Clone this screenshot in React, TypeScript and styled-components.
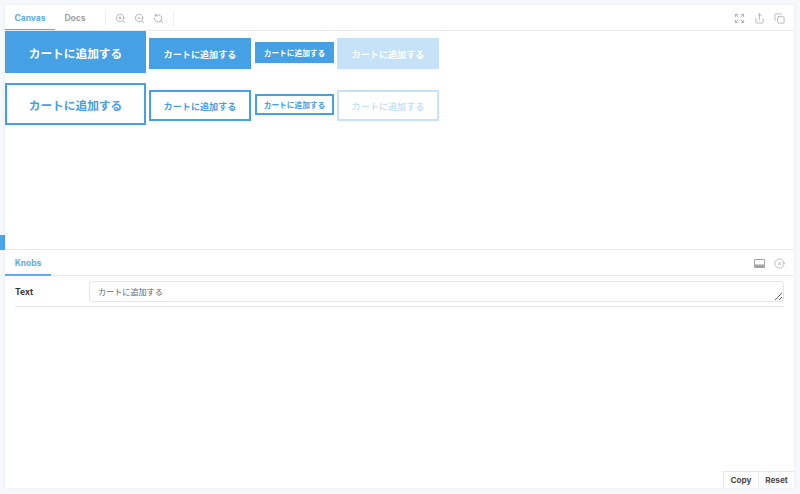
import React from "react"
import styled, { createGlobalStyle } from "styled-components"
import { ZoomIn, ZoomOut, Expand, Share, Copy, CircleX } from "lucide-react"

const BLUE = "#45a0e4"
const LABEL = "カートに追加する"

const GlobalStyle = createGlobalStyle`
  html, body {
    margin: 0;
    padding: 0;
    background: #f6f9fc;
    overflow: hidden;
  }
  body {
    font-family: "Inter", "Noto Sans CJK JP", sans-serif;
  }
`

const Page = styled.div`
  position: relative;
  width: 800px;
  height: 494px;
  padding: 5px 6px 6px 5px;
  box-sizing: border-box;
`

const SidebarMarker = styled.div`
  position: absolute;
  left: 0;
  top: 235px;
  width: 5px;
  height: 15px;
  background: #4aa5ea;
`

const Panel = styled.div`
  position: relative;
  display: flex;
  flex-direction: column;
  height: 483px;
  background: #fff;
  box-shadow: 0 0 4px rgba(0, 0, 0, 0.06);
`

const Toolbar = styled.div`
  display: flex;
  align-items: center;
  height: 25px;
  padding-top: 1px;
  box-sizing: border-box;
  flex: none;
  box-shadow: 0 1px 0 #e8e9ea;
  position: relative;
  z-index: 1;
`

const Tab = styled.div<{ $active?: boolean }>`
  display: flex;
  align-items: center;
  justify-content: center;
  font-size: 8.5px;
  font-weight: 700;
  height: 100%;
  box-sizing: border-box;
  color: ${(p) => (p.$active ? "#5cade9" : "#a0a0a0")};
`

const CanvasTab = styled(Tab)`
  width: 50px;
  padding-top: 1px;
  border-bottom: 1px solid #5cade9;
`

const DocsTab = styled(Tab)`
  width: 40px;
  margin-right: 10px;
`

const Separator = styled.div`
  width: 1px;
  height: 15px;
  background: #ececec;
`

const ToolGroup = styled.div`
  display: flex;
  align-items: center;
  gap: 8px;
  padding: 0 9px 0 9px;
  color: #a3a3a3;
`

const ToolEnd = styled(ToolGroup)`
  margin-left: auto;
  padding: 0 9px 0 0;
  gap: 9px;
`

const AddonTools = styled(ToolEnd)`
  padding-top: 2px;
`

const Canvas = styled.div`
  display: flex;
  flex-direction: column;
  gap: 10px;
  height: 220px;
  padding-top: 1px;
  flex: none;
  border-bottom: 1px solid #e8e9ea;
  box-sizing: border-box;
`

const ButtonRow = styled.div`
  display: flex;
  align-items: flex-start;
  height: 42px;
`

const sizes = {
  large: { w: 141, h: 42, font: 11.7, mr: 3, mt: 0 },
  medium: { w: 102, h: 31, font: 9.1, mr: 4, mt: 7 },
  small: { w: 79, h: 21, font: 7.7, mr: 3, mt: 11 },
}

const Cta = styled.div<{ $size: keyof typeof sizes; $outline?: boolean; $disabled?: boolean }>`
  display: flex;
  align-items: center;
  justify-content: center;
  box-sizing: border-box;
  flex: none;
  font-family: "Noto Sans CJK JP", sans-serif;
  font-weight: 700;
  width: ${(p) => sizes[p.$size].w}px;
  height: ${(p) => sizes[p.$size].h}px;
  margin-top: ${(p) => sizes[p.$size].mt}px;
  margin-right: ${(p) => sizes[p.$size].mr}px;
  font-size: ${(p) => sizes[p.$size].font}px;
  opacity: ${(p) => (p.$disabled ? 0.3 : 1)};
  background: ${(p) => (p.$outline ? "#fff" : BLUE)};
  color: ${(p) => (p.$outline ? BLUE : "#fff")};
  border: 2px solid ${BLUE};
`

const AddonTabs = styled.div`
  display: flex;
  align-items: center;
  height: 26px;
  flex: none;
  border-bottom: 1px solid #e8e9ea;
  box-sizing: border-box;
`

const KnobsTab = styled(Tab)`
  width: 46px;
  color: #5cade9;
  padding-top: 2px;
  border-bottom: 2px solid #5cade9;
  margin-bottom: -1px;
  height: 26px;
`

const KnobRow = styled.div`
  display: grid;
  grid-template-columns: 74px 695px;
  align-items: center;
  margin: 5px 0 0 10px;
  width: 769px;
  padding-bottom: 4px;
  border-bottom: 1px solid #e8e8e8;
`

const KnobLabel = styled.div`
  font-size: 8.5px;
  font-weight: 700;
  color: #333;
`

const KnobInput = styled.textarea`
  display: block;
  width: 695px;
  height: 21px;
  box-sizing: border-box;
  padding: 3px 8px;
  border: 1px solid #e6e6e6;
  border-radius: 3px;
  font-family: "Noto Sans CJK JP", sans-serif;
  font-size: 8.1px;
  line-height: 13px;
  color: #666;
  background: #fff;
  outline: none;
`

const ActionBar = styled.div`
  position: absolute;
  right: 0;
  bottom: 0;
  display: flex;
  height: 17px;
  background: #fff;
  border-top: 1px solid #e8e9ea;
  border-left: 1px solid #e8e9ea;
  box-sizing: border-box;
`

const ActionButton = styled.div<{ $w: number }>`
  display: flex;
  align-items: center;
  justify-content: center;
  box-sizing: border-box;
  width: ${(p) => p.$w}px;
  font-size: 8.2px;
  font-weight: 700;
  color: #4a4a4a;
  & + & {
    border-left: 1px solid #e8e9ea;
  }
`

function PanelBottomIcon() {
  return (
    <svg width="11" height="11" viewBox="0 0 11 11" fill="none" stroke="currentColor">
      <rect x="0.5" y="1.5" width="10" height="8" rx="0.5" />
      <rect x="0.5" y="6.5" width="10" height="3" fill="currentColor" stroke="none" />
    </svg>
  )
}

function ZoomResetIcon() {
  return (
    <svg width="11" height="11" viewBox="0 0 24 24" fill="none" stroke="currentColor" strokeWidth="1.8" strokeLinecap="round">
      <path d="M5 6.5A8 8 0 1 1 3 11" />
      <path d="M5 2.5v4h4" />
      <path d="m21 21-4.3-4.3" />
    </svg>
  )
}

function ButtonSet({ outline }: { outline?: boolean }) {
  return (
    <ButtonRow>
      <Cta $size="large" $outline={outline}>{LABEL}</Cta>
      <Cta $size="medium" $outline={outline}>{LABEL}</Cta>
      <Cta $size="small" $outline={outline}>{LABEL}</Cta>
      <Cta $size="medium" $outline={outline} $disabled>{LABEL}</Cta>
    </ButtonRow>
  )
}

export default function App() {
  return (
    <Page>
      <GlobalStyle />
      <SidebarMarker />
      <Panel>
        <Toolbar>
          <CanvasTab $active>Canvas</CanvasTab>
          <DocsTab>Docs</DocsTab>
          <Separator />
          <ToolGroup>
            <ZoomIn size={11} strokeWidth={1.6} />
            <ZoomOut size={11} strokeWidth={1.6} />
            <ZoomResetIcon />
          </ToolGroup>
          <Separator />
          <ToolEnd>
            <Expand size={11} strokeWidth={1.8} />
            <Share size={11} strokeWidth={1.6} />
            <Copy size={11} strokeWidth={1.6} />
          </ToolEnd>
        </Toolbar>
        <Canvas>
          <ButtonSet />
          <ButtonSet outline />
        </Canvas>
        <AddonTabs>
          <KnobsTab>Knobs</KnobsTab>
          <AddonTools>
            <PanelBottomIcon />
            <CircleX size={11} strokeWidth={1.5} />
          </AddonTools>
        </AddonTabs>
        <KnobRow>
          <KnobLabel>Text</KnobLabel>
          <KnobInput defaultValue={LABEL} />
        </KnobRow>
        <ActionBar>
          <ActionButton $w={34}>Copy</ActionButton>
          <ActionButton $w={36}>Reset</ActionButton>
        </ActionBar>
      </Panel>
    </Page>
  )
}
